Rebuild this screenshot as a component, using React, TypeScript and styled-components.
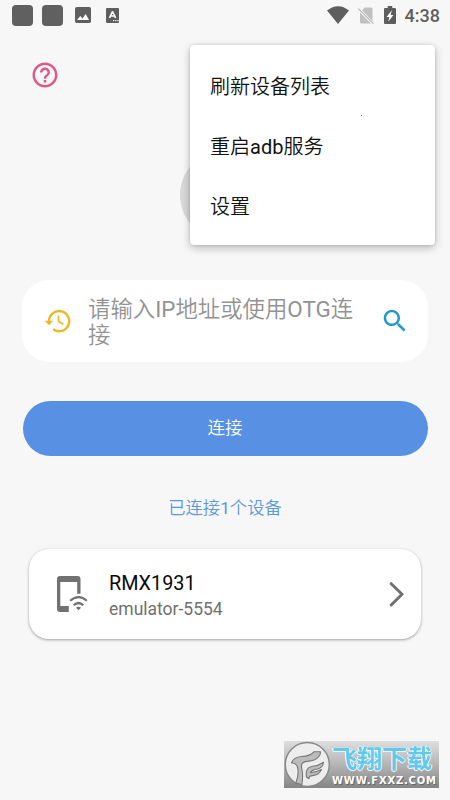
import React from 'react';
import styled, { createGlobalStyle } from 'styled-components';

const GlobalStyle = createGlobalStyle`
  * { box-sizing: border-box; }
  body { margin: 0; background: #f7f7f7; font-family: Roboto, "Noto Sans CJK SC", sans-serif; }
  button { font: inherit; border: 0; padding: 0; background: none; }
  svg { display: block; flex: none; }
`;

const Screen = styled.main`
  position: relative;
  display: flex;
  flex-direction: column;
  width: 450px;
  height: 800px;
  overflow: hidden;
  background: #f7f7f7;
`;

const StatusBar = styled.header`
  display: flex;
  justify-content: space-between;
  height: 30px;
  padding: 0 10px 0 12px;
  color: #5e5e5e;
`;

const StatusGroup = styled.div<{ $gap: number; $inset?: number }>`
  display: flex;
  align-items: center;
  gap: ${({ $gap }) => $gap}px;
  margin-left: ${({ $inset = 0 }) => $inset}px;
`;

const NoticeBlock = styled.span`
  width: 21px;
  height: 21px;
  border-radius: 4px;
  background: #606060;
`;

const Clock = styled.time`
  font-size: 18px;
  font-weight: 500;
  line-height: 30px;
  transform: translateY(1px);
`;

const Latin = styled.span`
  font-weight: 400;
`;

const TopBar = styled.div`
  display: flex;
  align-items: center;
  height: 90px;
  padding-left: 30px;
`;

const Avatar = styled.div`
  align-self: center;
  width: 90px;
  height: 90px;
  margin-top: 30px;
  border-radius: 50%;
  background: #d9d9d9;
`;

const SearchBox = styled.div`
  display: flex;
  align-items: center;
  height: 82px;
  margin: 40px 22px 0;
  padding: 0 18px 0 21px;
  border-radius: 27px;
  background: #fff;
`;

const Hint = styled.div`
  flex: 1;
  margin: 2px 22px 0 17px;
  color: #929292;
  font-size: 22.4px;
  font-weight: 350;
  line-height: 26px;
  white-space: nowrap;
`;

const ConnectButton = styled.button`
  height: 55px;
  margin: 38.5px 22.5px 0;
  border-radius: 28px;
  background: #5891e4;
  color: #fff;
  font-size: 17.5px;
  font-weight: 350;
  line-height: 55px;
`;

const DeviceCount = styled.p`
  margin: 40.5px 0 0;
  color: #5b98df;
  font-size: 17.3px;
  font-weight: 350;
  line-height: 25px;
  text-align: center;
`;

const DeviceCard = styled.section`
  display: flex;
  align-items: center;
  height: 90px;
  margin: 28px 29px 0;
  padding: 0 16px 0 24px;
  border-radius: 20px;
  background: #fff;
  box-shadow: 0 1px 3px rgba(0, 0, 0, 0.36);
`;

const DeviceText = styled.div`
  flex: 1;
  margin: 5px 0 0 16px;
`;

const DeviceName = styled.div`
  color: #080808;
  font-size: 19.8px;
  line-height: 26px;
`;

const DeviceId = styled.div`
  color: #707070;
  font-size: 17.5px;
  line-height: 25px;
`;

const Menu = styled.nav`
  position: absolute;
  top: 45px;
  left: 190px;
  width: 245px;
  height: 200px;
  padding: 12px 0 8px;
  border-radius: 4px;
  background: #fff;
  box-shadow: 0 3px 9px rgba(0, 0, 0, 0.25), 0 0 3px rgba(0, 0, 0, 0.14);
`;

const MenuItem = styled.button`
  display: block;
  width: 100%;
  height: 60px;
  padding-left: 20px;
  color: #111;
  font-size: 20px;
  font-weight: 350;
  line-height: 60px;
  text-align: left;
`;

const Speck = styled.span`
  position: absolute;
  top: 70px;
  left: 171px;
  width: 1px;
  height: 1px;
  background: #53a83a;
`;

const Watermark = styled.div`
  position: absolute;
  left: 284px;
  top: 741px;
  display: flex;
  width: 155px;
  height: 47px;
  background: linear-gradient(#dedede, #b5b5b5 50%, #858585);
`;

const WatermarkText = styled.div`
  width: 107px;
  margin-left: 1px;
`;

const WatermarkTitle = styled.div`
  height: 33px;
  color: #62c9eb;
  font-family: "Noto Sans CJK SC", sans-serif;
  font-size: 25px;
  font-weight: 700;
  line-height: 32px;
  white-space: nowrap;
  text-shadow: 0 0 1px #fff, 1px 0 #eefaff, -1px 0 #eefaff, 0 1px #eefaff;
`;

const WatermarkUrl = styled.div`
  color: #fff;
  font-family: "DejaVu Sans", sans-serif;
  font-size: 10px;
  font-weight: 700;
  line-height: 13px;
  letter-spacing: 0.8px;
  text-shadow: 1px 1px #666;
  white-space: nowrap;
`;

const PictureIcon = () => (
  <svg width="16" height="16" viewBox="0 0 16 16">
    <rect width="16" height="16" rx="1.8" fill="#5e5e5e" />
    <path d="M2 13 5.3 9l2.2 2.4L10.7 7 14 13Z" fill="#fff" />
  </svg>
);

const LetterIcon = () => (
  <svg width="13" height="15" viewBox="0 0 13 15">
    <rect width="13" height="15" rx="1" fill="#5e5e5e" />
    <path d="m3.5 10 2.7-6h.7l2.7 6M4.6 8h3.9" fill="none" stroke="#fff" strokeWidth="1.6" />
    <path d="M7 12.6h1.2m1 0h1.2m1 0h1.2" stroke="#fff" strokeWidth="1.2" />
  </svg>
);

const WifiIcon = () => (
  <svg width="22" height="18" viewBox="0 0 22 18">
    <path d="M0 4.5Q11-4 22 4.5L11 18Z" fill="#5e5e5e" />
  </svg>
);

const NoSimIcon = () => (
  <svg width="17" height="17" viewBox="0 0 17 17">
    <path d="M2 5.4v9.6q0 1.5 1.5 1.5h9.5ZM4.1 3.2 6.7.5H13q1.5 0 1.5 1.5v12.2Z" fill="#c0c0c0" />
    <path d="m.4 1.7 15 14.8" stroke="#bdbdbd" strokeWidth="1.2" />
  </svg>
);

const BatteryIcon = () => (
  <svg width="12" height="18" viewBox="0 0 12 18">
    <path d="M3.7 0h4.6v2H11q1 0 1 1v14q0 1-1 1H1q-1 0-1-1V3q0-1 1-1h2.7Z" fill="#5e5e5e" />
    <path d="M7.8 4.3 2.6 11h2.7L4.4 15.6 9.4 9H6.7Z" fill="#fff" />
  </svg>
);

const HelpIcon = () => (
  <svg width="30" height="30" viewBox="0 0 24 24" fill="#d95c88">
    <path d="M11 18h2v-2h-2v2zm1-16C6.48 2 2 6.48 2 12s4.48 10 10 10 10-4.48 10-10S17.52 2 12 2zm0 18c-4.41 0-8-3.59-8-8s3.59-8 8-8 8 3.59 8 8-3.59 8-8 8zm0-14c-2.21 0-4 1.79-4 4h2c0-1.1.9-2 2-2s2 .9 2 2c0 2-3 1.75-3 5h2c0-2.25 3-2.5 3-5 0-2.21-1.79-4-4-4z" />
  </svg>
);

const HistoryIcon = () => (
  <svg width="28" height="30" viewBox="0 0 28 30" fill="none" stroke="#e9b928" strokeWidth="2.4">
    <path d="M6 15.2a10.1 10.1 0 1 1 4.2 8.1" />
    <path d="m1.7 14.7 4.4 4.5 4.1-4.5Z" fill="#e9b928" stroke="none" />
    <path d="M15.5 9.5v5.7l4.8 3" strokeWidth="1.8" />
  </svg>
);

const SearchIcon = () => (
  <svg width="30" height="30" viewBox="0 0 24 24" fill="#2396d4">
    <path d="M15.5 14h-.79l-.28-.27C15.41 12.59 16 11.11 16 9.5 16 5.91 13.09 3 9.5 3S3 5.91 3 9.5 5.91 16 9.5 16c1.61 0 3.09-.59 4.23-1.57l.27.28v.79l5 4.99L20.49 19l-4.99-5zm-6 0C7.01 14 5 11.99 5 9.5S7.01 5 9.5 5 14 7.01 14 9.5 11.99 14 9.5 14z" />
  </svg>
);

const PhoneIcon = () => (
  <svg width="40" height="40" viewBox="0 0 40 40" fill="none" stroke="#717171">
    <path d="M15.8 38H7q-3 0-3-3V5q0-3 3-3h17.5q3 0 3 3v14.8h-3.3V7.9H7.3v24h8.5Z" fill="#717171" stroke="none" />
    <path d="M17.2 26.8q8.3-7.5 16.6 0M20.7 31.2q4.8-4.4 9.6 0" strokeWidth="2.2" />
    <path d="m23 33.8 2.5 2.5 2.5-2.5q-2.5-2-5 0Z" fill="#717171" stroke="none" />
  </svg>
);

const ChevronIcon = () => (
  <svg width="16" height="26" viewBox="0 0 16 26" fill="none" stroke="#707070" strokeWidth="3" strokeLinecap="round" strokeLinejoin="round">
    <path d="m2.2 2.7 10.8 10.6L2.2 24" />
  </svg>
);

const WatermarkLogo = () => (
  <svg width="47" height="47" viewBox="0 0 47 47">
    <circle cx="23.3" cy="23.5" r="22" fill="#ededed" stroke="#888" strokeWidth="1.4" />
    <g fill="#bcbcbc" stroke="#777" strokeWidth="1.1" strokeLinejoin="round">
      <path d="M7.5 22q2-6 10-6.5 9-.2 12.5-4.8l6.5.1-.5 3q-3.5 6-11 6.3-8.5.4-7.5 6 2 8 .3 17.5l-6-1.5q3.8-10 1.5-16.5-1.8-4-5.8-3.6Z" />
      <path d="M22.5 36q-1.5-9.5 5-10.5 7-.8 12-4.2-.6 5.5-6 6.7-6 .7-7 3.6 5.6-.1 11-3-2.7 5.8-9 6-3.8.2-3.5 3.2Z" />
    </g>
  </svg>
);

export default function App() {
  return (
    <>
      <GlobalStyle />
      <Screen>
        <StatusBar>
          <StatusGroup $gap={9}>
            <NoticeBlock />
            <NoticeBlock />
            <StatusGroup $gap={15.5} $inset={2.5}>
              <PictureIcon />
              <LetterIcon />
            </StatusGroup>
          </StatusGroup>
          <StatusGroup $gap={9}>
            <WifiIcon />
            <NoSimIcon />
            <BatteryIcon />
            <Clock>4:38</Clock>
          </StatusGroup>
        </StatusBar>
        <TopBar>
          <HelpIcon />
        </TopBar>
        <Avatar />
        <SearchBox>
          <HistoryIcon />
          <Hint>请输入<Latin>IP</Latin>地址或使用<Latin>OTG</Latin>连<br />接</Hint>
          <SearchIcon />
        </SearchBox>
        <ConnectButton>连接</ConnectButton>
        <DeviceCount>已连接<Latin>1</Latin>个设备</DeviceCount>
        <DeviceCard>
          <PhoneIcon />
          <DeviceText>
            <DeviceName>RMX1931</DeviceName>
            <DeviceId>emulator-5554</DeviceId>
          </DeviceText>
          <ChevronIcon />
        </DeviceCard>
        <Menu>
          <MenuItem>刷新设备列表</MenuItem>
          <MenuItem>重启<Latin>adb</Latin>服务</MenuItem>
          <MenuItem>设置</MenuItem>
          <Speck />
        </Menu>
        <Watermark>
          <WatermarkLogo />
          <WatermarkText>
            <WatermarkTitle>飞翔下载</WatermarkTitle>
            <WatermarkUrl>WWW.FXXZ.COM</WatermarkUrl>
          </WatermarkText>
        </Watermark>
      </Screen>
    </>
  );
}
